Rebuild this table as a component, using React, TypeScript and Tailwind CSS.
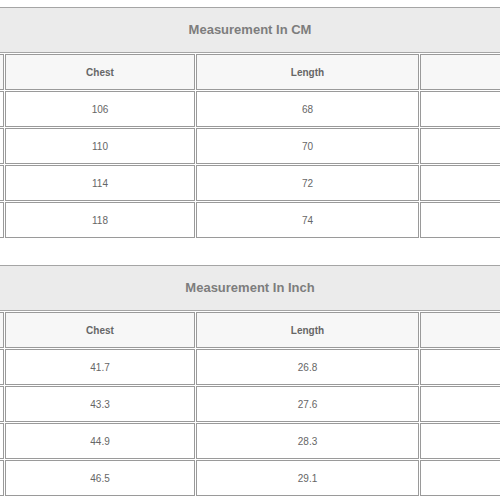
import React from 'react'

type Row = { chest: string; length: string }

const cm: Row[] = [
  { chest: '106', length: '68' },
  { chest: '110', length: '70' },
  { chest: '114', length: '72' },
  { chest: '118', length: '74' },
]

const inch: Row[] = [
  { chest: '41.7', length: '26.8' },
  { chest: '43.3', length: '27.6' },
  { chest: '44.9', length: '28.3' },
  { chest: '46.5', length: '29.1' },
]

// outer columns run past the window edges, so they stay empty here
function SizeTable({ title, rows }: { title: string; rows: Row[] }) {
  const cell = 'h-[36px] border border-[#9a9a9a] flex items-center justify-center'
  return (
    <div className="ml-[-150px] w-[800px] p-[1px] grid grid-cols-[153px_190px_223px_229px] gap-[1px]">
      <div className="col-span-4 h-[46px] border border-[#a5a5a5] bg-[#ebebeb] flex items-center justify-center text-[13px] font-bold text-[#7d7d7d]">
        {title}
      </div>

      <div className={`${cell} bg-[#f7f7f7]`} />
      <div className={`${cell} bg-[#f7f7f7] text-[10px] font-bold text-[#666]`}>Chest</div>
      <div className={`${cell} bg-[#f7f7f7] text-[10px] font-bold text-[#666]`}>Length</div>
      <div className={`${cell} bg-[#f7f7f7]`} />

      {rows.map((r, i) => (
        <React.Fragment key={i}>
          <div className={`${cell} bg-white`} />
          <div className={`${cell} bg-white text-[10px] text-[#666]`}>{r.chest}</div>
          <div className={`${cell} bg-white text-[10px] text-[#666]`}>{r.length}</div>
          <div className={`${cell} bg-white`} />
        </React.Fragment>
      ))}
    </div>
  )
}

export default function App() {
  return (
    <div className="w-[500px] h-[500px] overflow-hidden bg-white pt-[6px] font-['Liberation_Sans',Arial,sans-serif]">
      <SizeTable title="Measurement In CM" rows={cm} />
      <div className="mt-[25px]">
        <SizeTable title="Measurement In Inch" rows={inch} />
      </div>
    </div>
  )
}
